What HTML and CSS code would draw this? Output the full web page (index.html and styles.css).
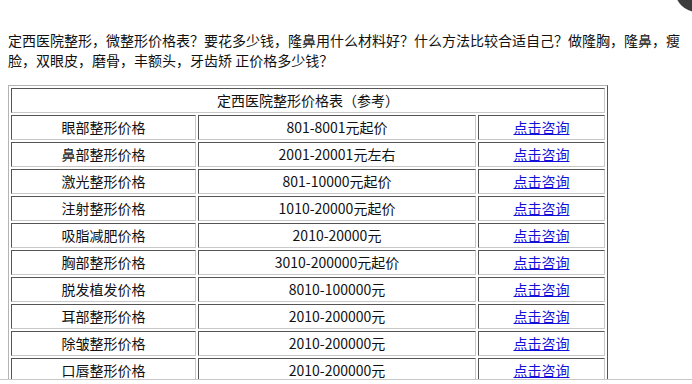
FILE: index.html
```html
<!DOCTYPE html>
<html lang="zh-CN">
<head>
<meta charset="utf-8">
<title>定西医院整形价格表</title>
<link rel="stylesheet" href="styles.css">
</head>
<body>
<div class="page">
  <p class="intro">定西医院整形，微整形价格表？要花多少钱，隆鼻用什么材料好？什么方法比较合适自己？做隆胸，隆鼻，瘦脸，双眼皮，磨骨，丰额头，牙齿矫 正价格多少钱？</p>
  <table class="price-table">
    <tr class="title-row"><td colspan="3">定西医院整形价格表（参考）</td></tr>
    <tr class="item"><td>眼部整形价格</td><td>801-8001元起价</td><td><a href="#">点击咨询</a></td></tr>
    <tr class="item"><td>鼻部整形价格</td><td>2001-20001元左右</td><td><a href="#">点击咨询</a></td></tr>
    <tr class="item"><td>激光整形价格</td><td>801-10000元起价</td><td><a href="#">点击咨询</a></td></tr>
    <tr class="item"><td>注射整形价格</td><td>1010-20000元起价</td><td><a href="#">点击咨询</a></td></tr>
    <tr class="item"><td>吸脂减肥价格</td><td>2010-20000元</td><td><a href="#">点击咨询</a></td></tr>
    <tr class="item"><td>胸部整形价格</td><td>3010-200000元起价</td><td><a href="#">点击咨询</a></td></tr>
    <tr class="item"><td>脱发植发价格</td><td>8010-100000元</td><td><a href="#">点击咨询</a></td></tr>
    <tr class="item"><td>耳部整形价格</td><td>2010-200000元</td><td><a href="#">点击咨询</a></td></tr>
    <tr class="item"><td>除皱整形价格</td><td>2010-200000元</td><td><a href="#">点击咨询</a></td></tr>
    <tr class="item"><td>口唇整形价格</td><td>2010-200000元</td><td><a href="#">点击咨询</a></td></tr>
    <tr class="item"><td>面部整形价格</td><td>2010-200000元</td><td><a href="#">点击咨询</a></td></tr>
  </table>
</div>
<div class="corner-dot"></div>
</body>
</html>
```

FILE: styles.css
```css
html, body {
  margin: 0;
  padding: 0;
  background: #fff;
}

body {
  font-family: "Noto Sans CJK SC", "Noto Sans", sans-serif;
  font-size: 14px;
  color: #111;
  position: relative;
  overflow: hidden;
  height: 384px;
}

.page {
  height: 379px;
  overflow: hidden;
  border-bottom: 1px solid #c8c8c8;
  padding: 30px 8px 0;
  box-sizing: border-box;
  height: 380px;
}

.intro {
  margin: 0 0 15px;
  line-height: 20px;
}

.price-table {
  width: 600px;
  border-collapse: separate;
  border-spacing: 2px;
  border-style: solid;
  border-width: 1px;
  border-color: #b4b4b4 #555 #555 #b4b4b4;
  font-size: 14px;
}

.price-table td {
  padding: 1px;
  height: 21px;
  line-height: 21px;
  text-align: center;
  border-style: solid;
  border-width: 1px;
  border-color: #555 #c8c8c8 #c8c8c8 #555;
  white-space: nowrap;
}

.item td:nth-child(1) { width: 181px; }
.item td:nth-child(2) { width: 274px; }
.item td:nth-child(3) { width: 123px; }

.price-table a {
  color: #1010d8;
  text-decoration: underline;
}

.corner-dot {
  position: absolute;
  left: 675px;
  top: -32px;
  width: 44px;
  height: 44px;
  border-radius: 50%;
  background: #3c3c3c;
}
```
